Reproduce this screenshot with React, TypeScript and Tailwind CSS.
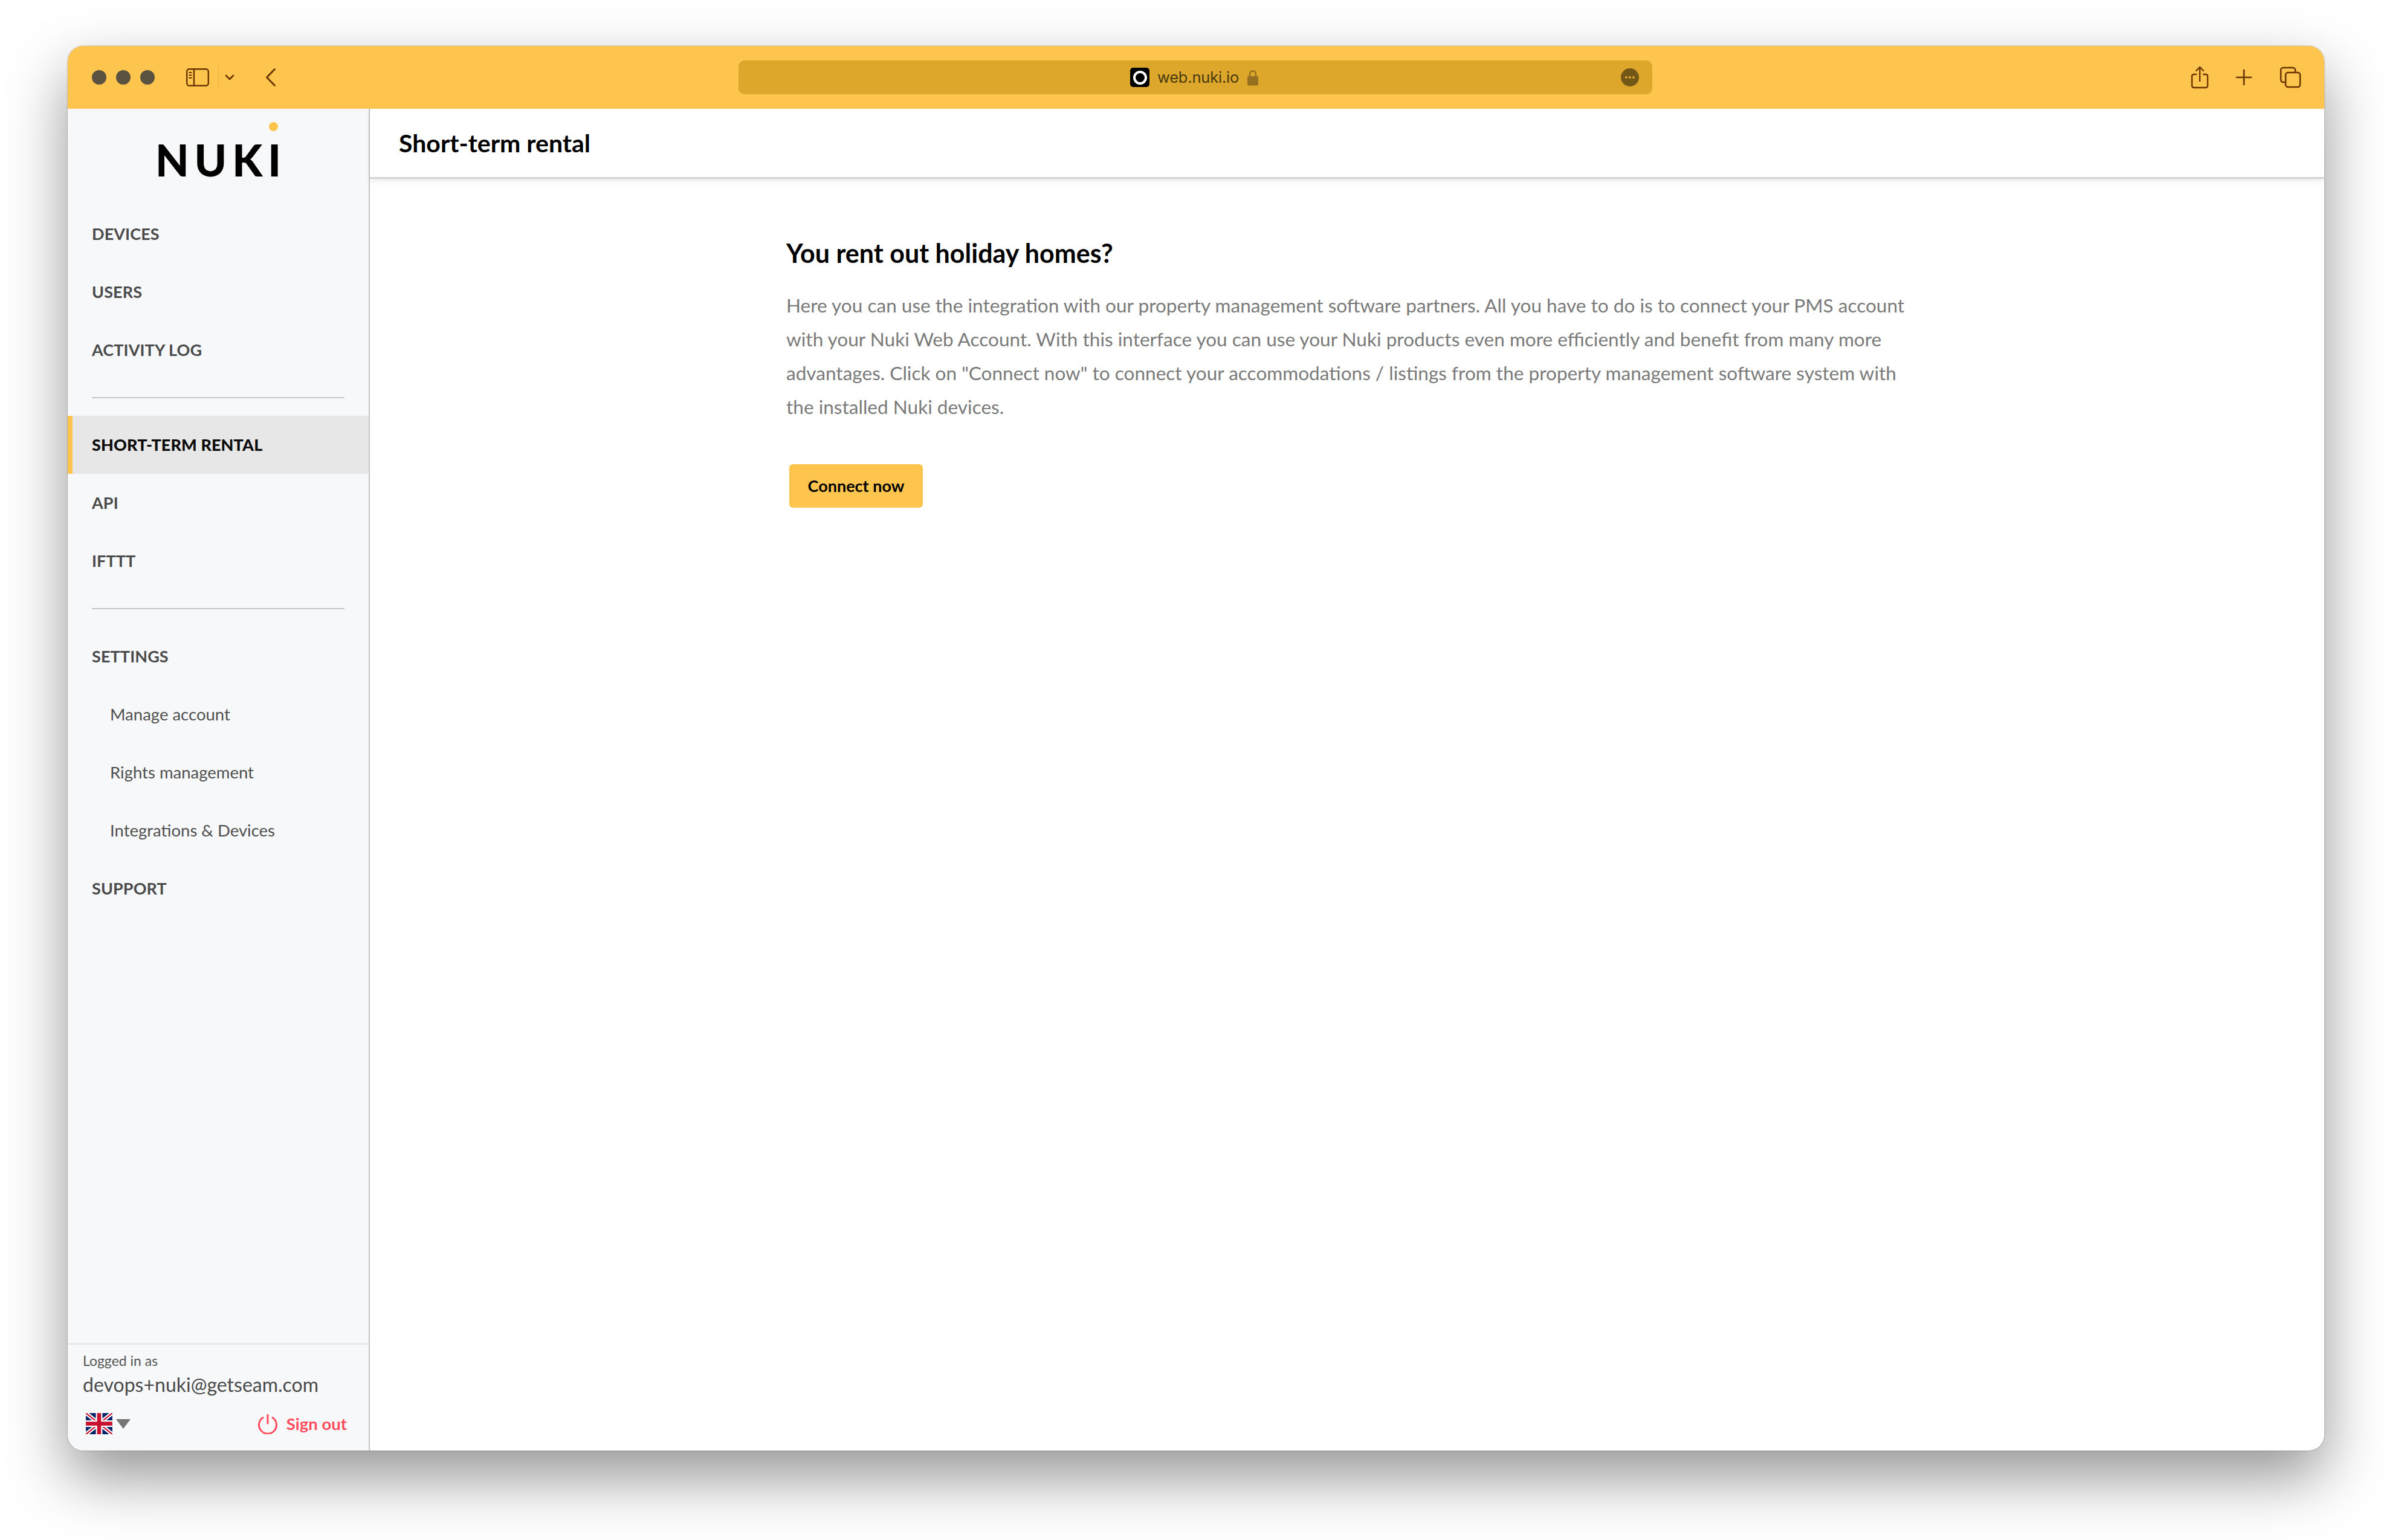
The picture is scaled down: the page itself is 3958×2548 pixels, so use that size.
import { ReactNode } from 'react';

const NAV_TOP = ['DEVICES', 'USERS', 'ACTIVITY LOG'];
const NAV_MID = ['API', 'IFTTT'];
const NAV_SUB = ['Manage account', 'Rights management', 'Integrations & Devices'];

function NavItem({ children }: { children: ReactNode }) {
  return (
    <div className="h-[96px] pl-10 flex items-center text-[27px] tracking-[0.1px] font-bold text-[#4a4a4a]">{children}</div>
  );
}

function SubItem({ children }: { children: ReactNode }) {
  return <div className="h-[96px] pl-[70px] flex items-center text-[27.5px] text-[#505050]">{children}</div>;
}

function UkFlag() {
  return (
    <svg width="44" height="35" viewBox="0 0 60 48" className="block">
      <rect width="60" height="48" fill="#012169" />
      <path d="M0 0L60 48M60 0L0 48" stroke="#fff" strokeWidth="9" />
      <path d="M0 0L60 48M60 0L0 48" stroke="#C8102E" strokeWidth="3" />
      <path d="M30 0V48M0 24H60" stroke="#fff" strokeWidth="15" />
      <path d="M30 0V48M0 24H60" stroke="#C8102E" strokeWidth="9" />
    </svg>
  );
}

function Toolbar() {
  return (
    <div className="h-[104px] shrink-0 bg-[#fdc54d] flex items-center relative">
      <div className="flex gap-4 ml-10">
        <div className="w-6 h-6 rounded-full bg-[#5b5140]" />
        <div className="w-6 h-6 rounded-full bg-[#5b5140]" />
        <div className="w-6 h-6 rounded-full bg-[#5b5140]" />
      </div>
      {/* sidebar toggle */}
      <svg width="38" height="30" viewBox="0 0 38 30" fill="none" stroke="#6b3500" strokeWidth="2.4" className="ml-[52px]">
        <rect x="1.2" y="1.2" width="35.6" height="27.6" rx="4" />
        <path d="M13 1.2V28.8" />
        <path d="M4.5 7H9.5M4.5 11.5H9.5M4.5 16H9.5" strokeWidth="2" />
      </svg>
      <div className="w-px h-[42px] bg-[#efb53f] ml-[15px]" />
      <svg width="16" height="10" viewBox="0 0 16 10" fill="none" stroke="#6b3500" strokeWidth="2.6" strokeLinecap="round" strokeLinejoin="round" className="ml-[10px]">
        <path d="M2 2L8 8L14 2" />
      </svg>
      <svg width="16" height="30" viewBox="0 0 16 30" fill="none" stroke="#6b3500" strokeWidth="2.8" strokeLinecap="round" strokeLinejoin="round" className="ml-[52px]">
        <path d="M14.5 1.5L1.5 15L14.5 28.5" />
      </svg>

      {/* address bar */}
      <div className="ml-[766px] w-[1512px] h-14 rounded-[10px] bg-[#dca72b] flex items-center relative">
        <div className="ml-[648px] w-8 h-8 rounded-[5px] bg-black flex items-center justify-center">
          <div className="w-[23px] h-[23px] rounded-full border-[4px] border-white" />
        </div>
        <span className="ml-[13px] text-[25.5px] text-[#4a3a12] font-['Inter',sans-serif] tracking-[-0.2px]">web.nuki.io</span>
        <svg width="20" height="27" viewBox="0 0 20 27" className="ml-[13px]">
          <path d="M5 12V7.5a5 5 0 0 1 10 0V12" fill="none" stroke="#96701f" strokeWidth="2.4" />
          <rect x="1" y="11" width="18" height="15.5" rx="2.5" fill="#96701f" />
        </svg>
        <div className="ml-auto mr-[22px] w-[30px] h-[30px] rounded-full bg-[#735717] flex items-center justify-center gap-[2px]">
          <div className="w-[4px] h-[4px] rounded-full bg-[#dca72b]" />
          <div className="w-[4px] h-[4px] rounded-full bg-[#dca72b]" />
          <div className="w-[4px] h-[4px] rounded-full bg-[#dca72b]" />
        </div>
      </div>

      <div className="ml-auto mr-[38px] flex items-center">
        <svg width="30" height="38" viewBox="0 0 30 38" fill="none" stroke="#6b3500" strokeWidth="2.4" strokeLinecap="round" strokeLinejoin="round">
          <path d="M9 14H5a3 3 0 0 0-3 3v16a3 3 0 0 0 3 3h20a3 3 0 0 0 3-3V17a3 3 0 0 0-3-3h-4" />
          <path d="M15 25V2M9 8l6-6 6 6" />
        </svg>
        <svg width="28" height="28" viewBox="0 0 28 28" fill="none" stroke="#6b3500" strokeWidth="2.6" strokeLinecap="round" className="ml-[44px]">
          <path d="M14 2V26M2 14H26" />
        </svg>
        <svg width="36" height="36" viewBox="0 0 36 36" fill="none" stroke="#6b3500" strokeWidth="2.6" className="ml-[45px]">
          <path d="M9 26H6a4 4 0 0 1-4-4V6a4 4 0 0 1 4-4h16a4 4 0 0 1 4 4v3" />
          <rect x="10" y="10" width="24" height="24" rx="4" />
        </svg>
      </div>
    </div>
  );
}

function Sidebar() {
  return (
    <aside className="w-[500px] shrink-0 bg-[#f7f8fa] border-r-2 border-[#c6c6c6] flex flex-col">
      <div className="h-[159px] flex justify-center relative">
        <span className="mt-[44px] text-[72px] leading-[80px] font-black text-black tracking-[9px] pl-[9px] h-fit">NUKI</span>
        <div className="absolute left-[333px] top-[22px] w-[15px] h-[15px] rounded-full bg-[#fdc54d]" />
      </div>

      {NAV_TOP.map(n => <NavItem key={n}>{n}</NavItem>)}
      <div className="h-[2px] bg-[#c6c7ca] mx-10 mt-[30px] mb-[29px]" />

      <div className="h-[96px] pl-8 border-l-8 border-[#fdc54d] bg-[#e7e7e7] flex items-center text-[27px] tracking-[0.1px] font-black text-[#0c0c0c]">
        SHORT-TERM RENTAL
      </div>
      {NAV_MID.map(n => <NavItem key={n}>{n}</NavItem>)}
      <div className="h-[2px] bg-[#c6c7ca] mx-10 mt-[30px] mb-[30px]" />

      <NavItem>SETTINGS</NavItem>
      {NAV_SUB.map(n => <SubItem key={n}>{n}</SubItem>)}
      <NavItem>SUPPORT</NavItem>

      <div className="mt-auto border-t-[3px] border-[#e8e9ec] h-[178px] pl-[25px] pr-[36px] pt-[12px] text-[#4a4a4a]">
        <div className="text-[23px] leading-[28px] text-[#555555]">Logged in as</div>
        <div className="text-[32px] leading-[40px] mt-[6px]">devops+nuki@getseam.com</div>
        <div className="flex items-center mt-[24px]">
          <div className="ml-[5px]"><UkFlag /></div>
          <div className="ml-[6px] w-0 h-0 border-x-[12px] border-x-transparent border-t-[16px] border-t-[#757575]" />
          <svg width="34" height="34" viewBox="0 0 34 34" fill="none" stroke="#ff4d5e" strokeWidth="3" strokeLinecap="round" className="ml-auto">
            <path d="M17 2V16" />
            <path d="M9 6.5a14.5 14.5 0 1 0 16 0" />
          </svg>
          <span className="ml-[14px] text-[27.5px] font-bold text-[#ff4d5e]">Sign out</span>
        </div>
      </div>
    </aside>
  );
}

export default function App() {
  return (
    <div className="w-[3958px] h-[2548px] bg-white pt-[76px] pl-[112px] font-['Lato',sans-serif]">
      <div className="w-[3734px] h-[2324px] rounded-[26px] overflow-hidden flex flex-col bg-white shadow-[0_44px_100px_rgba(0,0,0,0.42),0_0_2px_rgba(0,0,0,0.45)]">
        <Toolbar />
        <div className="flex flex-1 min-h-0">
          <Sidebar />
          <main className="flex-1 flex flex-col">
            <header className="h-[116px] border-b-[3px] border-[#d4d4d4] shadow-[0_4px_8px_rgba(0,0,0,0.08)] pl-[48px] flex items-center text-[41px] font-bold text-black">
              Short-term rental
            </header>
            <div className="pl-[689px] pt-[95px]">
              <h1 className="text-[43px] leading-[56px] font-bold text-black">You rent out holiday homes?</h1>
              <p className="mt-[30px] w-[1872px] text-[31.55px] leading-[56px] text-[#7a7a7a]">
                Here you can use the integration with our property management software partners. All you have to do is to connect your PMS account
                with your Nuki Web Account. With this interface you can use your Nuki products even more efficiently and benefit from many more
                advantages. Click on "Connect now" to connect your accommodations / listings from the property management software system with
                the installed Nuki devices.
              </p>
              <button className="mt-[67px] ml-[5px] w-[221px] h-[72px] rounded-[6px] bg-[#fdc54d] text-[27px] font-bold text-black">
                Connect now
              </button>
            </div>
          </main>
        </div>
      </div>
    </div>
  );
}
